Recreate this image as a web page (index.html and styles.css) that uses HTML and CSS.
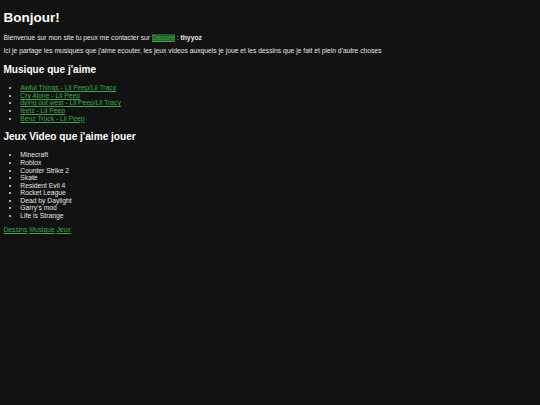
FILE: index.html
```html
<!DOCTYPE html>
<html lang="fr">
<head>
    <meta charset="UTF-8">
    <title>Bonjour!</title>
    <link rel="stylesheet" href="styles.css">
</head>
<body>
<h1>Bonjour!</h1>
<p>Bienvenue sur mon site tu peux me contacter sur <a class="discord" href="#">Discord</a> : <b>thyyoz</b></p>
<p>Ici je partage les musiques que j'aime ecouter, les jeux videos auxquels je joue et les dessins que je fait et plein d'autre choses</p>

<!-- Musique -->
<h2>Musique que j'aime</h2>
<ul>
    <li><a href="#">Awful Things - Lil Peep/Lil Tracy</a></li>
    <li><a href="#">Cry Alone - Lil Peep</a></li>
    <li><a href="#">dying out west - Lil Peep/Lil Tracy</a></li>
    <li><a href="#">feelz - Lil Peep</a></li>
    <li><a href="#">Benz Truck - Lil Peep</a></li>
</ul>

<!-- Jeux -->
<h2>Jeux Video que j'aime jouer</h2>
<ul>
    <li>Minecraft</li>
    <li>Roblox</li>
    <li>Counter Strike 2</li>
    <li>Skate</li>
    <li>Resident Evil 4</li>
    <li>Rocket League</li>
    <li>Dead by Daylight</li>
    <li>Garry's mod</li>
    <li>Life is Strange</li>
</ul>

<a href="#">Dessins</a>
<a href="#">Musique</a>
<a href="#">Jeux</a>
</body>
</html>
```

FILE: styles.css
```css
html {
    background-color: #121212;
}

body {
    margin: 3.4px;
    font-family: "Liberation Sans", Arial, sans-serif;
    font-size: 6.75px;
    line-height: 1.12;
    color: #e6e6e6;
}

h1, h2 {
    color: white;
    line-height: normal;
}

h1 {
    font-size: 13.5px;
    margin: 6.5px 0 9px;
}

h2 {
    font-size: 10.1px;
    margin: 9.2px 0;
}

p {
    margin: 6px 0;
}

ul {
    margin: 6.75px 0;
    padding-left: 16.9px;
}

a {
    color: #3fa650;
}

.discord {
    background-color: #1f5a2a;
}
```
